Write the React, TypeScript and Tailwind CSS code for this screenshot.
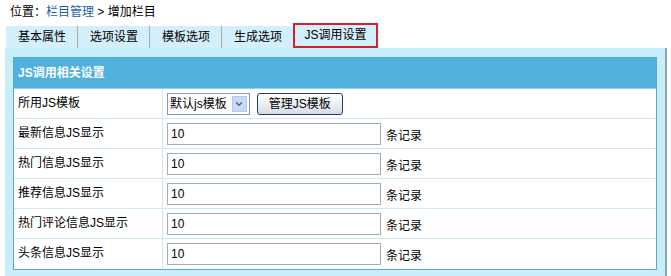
import { ChevronDown } from "lucide-react";

const rows = [
  "最新信息JS显示",
  "热门信息JS显示",
  "推荐信息JS显示",
  "热门评论信息JS显示",
  "头条信息JS显示",
];

const tabs = ["基本属性", "选项设置", "模板选项", "生成选项"];

export default function App() {
  return (
    <div
      className="w-[671px] h-[276px] bg-white text-[12px] text-black overflow-hidden"
      style={{ fontFamily: '"Liberation Sans", "Noto Sans CJK SC", sans-serif' }}
    >
      {/* Breadcrumb */}
      <div className="h-[22px] pl-[10px] pt-[4px] leading-[16px]">
        位置：<span className="text-[#1a5fa8]">栏目管理</span> &gt; 增加栏目
      </div>

      {/* Tabs */}
      <div className="flex h-[26px] pl-[6px] items-end">
        <div className="flex h-[22px] bg-[#d3effb]">
          {tabs.map((t, i) => (
            <div
              key={t}
              className={`pl-[12px] pr-[11px] leading-[22px] ${i < tabs.length - 1 ? "border-r border-[#a9a9a9]" : ""}`}
            >
              {t}
            </div>
          ))}
        </div>
        <div className="h-[25px] w-[85px] border-2 border-[#d6202a] bg-[#d3effb] text-center leading-[20px]">
          JS调用设置
        </div>
      </div>

      {/* Panel */}
      <div className="ml-[5px] w-[662px] h-[228px] bg-[#c9eefb] border-r-2 border-[#8fa9b4] pt-[9px] pl-[8px]">
        <div className="w-[644px] border border-[#5aa9c9] bg-white">
          <div className="h-[31px] bg-[#50b2dc] border-b border-[#8fd3ee] pl-[4px] leading-[31px] font-bold text-white">
            JS调用相关设置
          </div>
          <div className="flex h-[30px] border-b border-[#cfe9f3]">
            <div className="w-[149px] border-r border-[#cfe9f3] pl-[4px] leading-[29px]">所用JS模板</div>
            <div className="flex items-center pl-[4px] gap-[7px]">
              <div className="flex h-[22px] border border-[#7f9db9] bg-white">
                <span className="pl-[2px] pr-[3px] leading-[20px]">默认js模板</span>
                <span className="m-[2px] w-[15px] flex items-center justify-center bg-[#c9d8f5] border border-[#b4c7ef]">
                  <ChevronDown className="w-[10px] h-[10px] text-[#4d6185]" strokeWidth={3} />
                </span>
              </div>
              <div className="h-[22px] w-[86px] border border-[#1f3d6d] rounded-[3px] bg-gradient-to-b from-white to-[#d6dde8] text-center leading-[20px]">
                管理JS模板
              </div>
            </div>
          </div>
          {rows.map((r, i) => (
            <div
              key={r}
              className={`flex h-[30px] ${i < rows.length - 1 ? "border-b border-[#cfe9f3]" : ""}`}
            >
              <div className="w-[149px] border-r border-[#cfe9f3] pl-[4px] leading-[29px]">{r}</div>
              <div className="flex items-center pl-[4px]">
                <div className="w-[214px] h-[22px] border border-[#a5acb2] pl-[3px] leading-[20px] bg-white">10</div>
                <span className="ml-[5px] pt-[4px]">条记录</span>
              </div>
            </div>
          ))}
        </div>
      </div>
    </div>
  );
}
